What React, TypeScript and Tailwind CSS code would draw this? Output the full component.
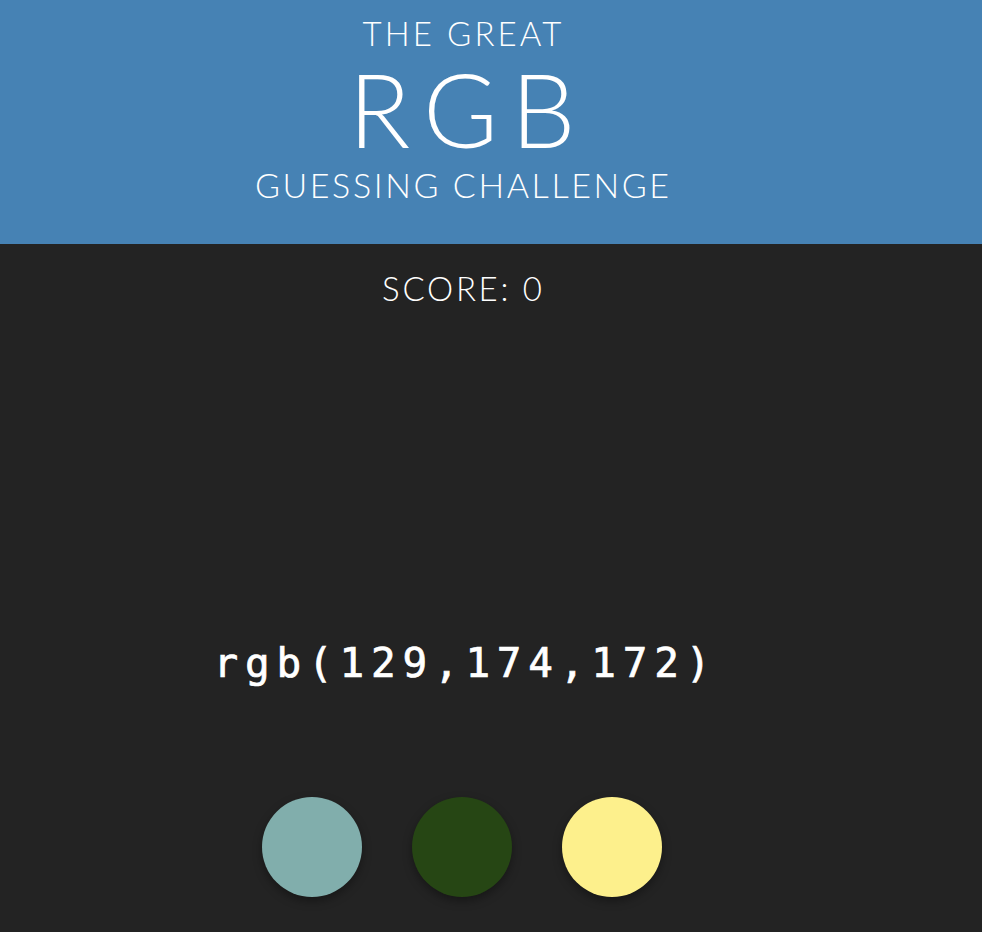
import React from "react";

export default function App() {
  const colors = ["#81aeac", "#264614", "#fdf08c"];
  return (
    <div className="min-h-[932px] w-full bg-[#232323]" style={{ fontFamily: "Lato, 'Noto Sans', sans-serif" }}>
      <header className="h-[244px] w-full bg-[#4682b4]">
        <div className="flex w-[924px] flex-col items-center pt-[13px] font-light text-white">
          <div className="pl-[3.1px] text-[33px] leading-[40px] tracking-[3.1px]">THE GREAT</div>
          <div className="mt-[1px] pl-[13px] text-[102px] leading-[110px] tracking-[13px]">RGB</div>
          <div className="mt-[1px] pl-[2.6px] text-[34px] leading-[40px] tracking-[2.6px]">GUESSING CHALLENGE</div>
        </div>
      </header>
      <div className="flex w-[924px] flex-col items-center text-white">
        <div className="mt-[24px] pl-[2.7px] text-[33px] font-light leading-[40px] tracking-[2.7px]">SCORE: 0</div>
        <div
          className="mt-[330px] pl-[6.8px] text-[41px] leading-[50px] tracking-[6.8px] [-webkit-text-stroke:0.7px_white]"
          style={{ fontFamily: "'DejaVu Sans Mono', 'Liberation Mono', monospace" }}
        >
          rgb(129,174,172)
        </div>
        <div className="mt-[109px] flex gap-[50px]">
          {colors.map((c) => (
            <div
              key={c}
              className="h-[100px] w-[100px] rounded-full shadow-[0_4px_10px_rgba(0,0,0,0.35)]"
              style={{ backgroundColor: c }}
            />
          ))}
        </div>
      </div>
    </div>
  );
}
